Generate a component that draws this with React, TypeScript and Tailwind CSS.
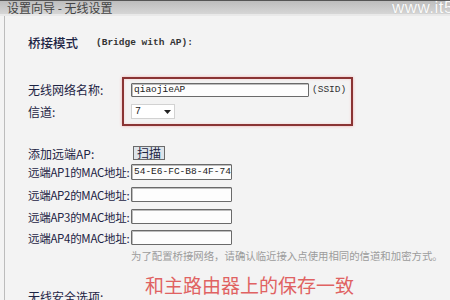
import React from 'react';

const CJK = '"Noto Sans CJK SC", "Noto Sans", sans-serif';
const MONO = '"Liberation Mono", "Noto Sans CJK SC", monospace';

const MAC_ROWS = [
  { label: '远端AP1的MAC地址:', value: '54-E6-FC-B8-4F-74', h: 'h-[16px]', mt: 'mt-[4px]' },
  { label: '远端AP2的MAC地址:', value: '', h: 'h-[15px]', mt: 'mt-[7px]' },
  { label: '远端AP3的MAC地址:', value: '', h: 'h-[15px]', mt: 'mt-[7px]' },
  { label: '远端AP4的MAC地址:', value: '', h: 'h-[15px]', mt: 'mt-[6px]' },
];

function TextBox({ value, className }: { value: string; className: string }) {
  return (
    <div
      className={`flex items-center border border-[#6a6a6a] rounded-[1px] bg-[#fdfdfd] shadow-[inset_1px_1px_0_#bdbdbd] pl-[2px] text-[9.5px] leading-[12px] text-[#222] ${className}`}
      style={{ fontFamily: MONO }}
    >
      {value}
    </div>
  );
}

export default function App() {
  return (
    <div className="w-[450px] h-[300px] overflow-hidden bg-[#f3f3f3] flex flex-col" style={{ fontFamily: CJK }}>
      {/* Title bar */}
      <div className="relative h-[14px] shrink-0 border-t border-[#555] bg-gradient-to-b from-[#bdbdbd] to-[#d6d6d6] flex items-center pl-[7px]">
        <span className="text-[12px] leading-[13px] text-[#444]">设置向导 - 无线设置</span>
        <span
          className="absolute right-[-4px] top-[-2px] text-[17px] leading-[17px] text-[#fafafa] tracking-[0.5px] [text-shadow:0_0_1px_#aaa]"
          style={{ fontFamily: '"Liberation Sans", sans-serif' }}
        >
          www.it5
        </span>
      </div>
      <div className="h-[2px] shrink-0 bg-[#e9e9e9]" />

      {/* Body */}
      <div className="flex-1 ml-[4px] border-l border-[#bcbcbc] pl-[23px] text-[#1d2444] text-[12px] leading-[15px]">
        <div className="mt-[18px] flex items-center h-[16px]">
          <span className="w-[68px] text-[12.5px] font-medium">桥接模式</span>
          <span className="text-[9.5px] font-bold text-[#333]" style={{ fontFamily: MONO }}>
            (Bridge with AP):
          </span>
        </div>

        {/* SSID / channel */}
        <div className="mt-[27px] flex">
          <div className="w-[94px] pt-[6px]">
            <div className="h-[14px] leading-[14px]">无线网络名称:</div>
            <div className="mt-[7px] h-[15px] leading-[15px]">信道:</div>
          </div>
          <div className="w-[231px] h-[49px] border-2 border-[#8a3434] shadow-[0_0_3px_#f2b0b0,inset_0_0_3px_#f6cfcf] pt-[4px] pl-[7px]">
            <div className="flex items-center h-[14px]">
              <TextBox value="qiaojieAP" className="w-[178px] h-[14px]" />
              <span className="ml-[3px] text-[9.5px] leading-[12px] text-[#333]" style={{ fontFamily: MONO }}>
                (SSID)
              </span>
            </div>
            <div
              className="mt-[7px] w-[44px] h-[15px] bg-white border border-[#d2d2d2] flex items-center justify-between px-[3px] text-[10px] leading-[12px] text-[#222]"
              style={{ fontFamily: MONO }}
            >
              <span>7</span>
              <svg width="7" height="4" viewBox="0 0 7 4">
                <path d="M0 0h7L3.5 4z" fill="#222" />
              </svg>
            </div>
          </div>
        </div>

        {/* Remote APs */}
        <div className="mt-[20px] flex items-center h-[14px]">
          <span className="w-[105px]">添加远端AP:</span>
          <button className="h-[14px] px-[3px] border border-[#6a6a6a] bg-[#dde4ea] text-[12px] leading-[12px] text-[#1d2444]">
            扫描
          </button>
        </div>
        {MAC_ROWS.map((r) => (
          <div key={r.label} className={`flex items-center ${r.h} ${r.mt}`}>
            <span className="w-[103px] text-[11.5px] leading-[14px] tracking-[-0.3px]">{r.label}</span>
            <TextBox value={r.value} className={`w-[101px] ${r.h}`} />
          </div>
        ))}

        <div className="mt-[5px] ml-[103px] h-[12px] text-[10.4px] leading-[12px] text-[#9c9c9c] whitespace-nowrap">
          为了配置桥接网络，请确认临近接入点使用相同的信道和加密方式。
        </div>

        <div className="mt-[12px] flex items-start">
          <span className="w-[117px] mt-[15px] text-[12px]">无线安全选项:</span>
          <span className="text-[19px] leading-[22px] text-[#e06262] whitespace-nowrap">和主路由器上的保存一致</span>
        </div>
      </div>
    </div>
  );
}
